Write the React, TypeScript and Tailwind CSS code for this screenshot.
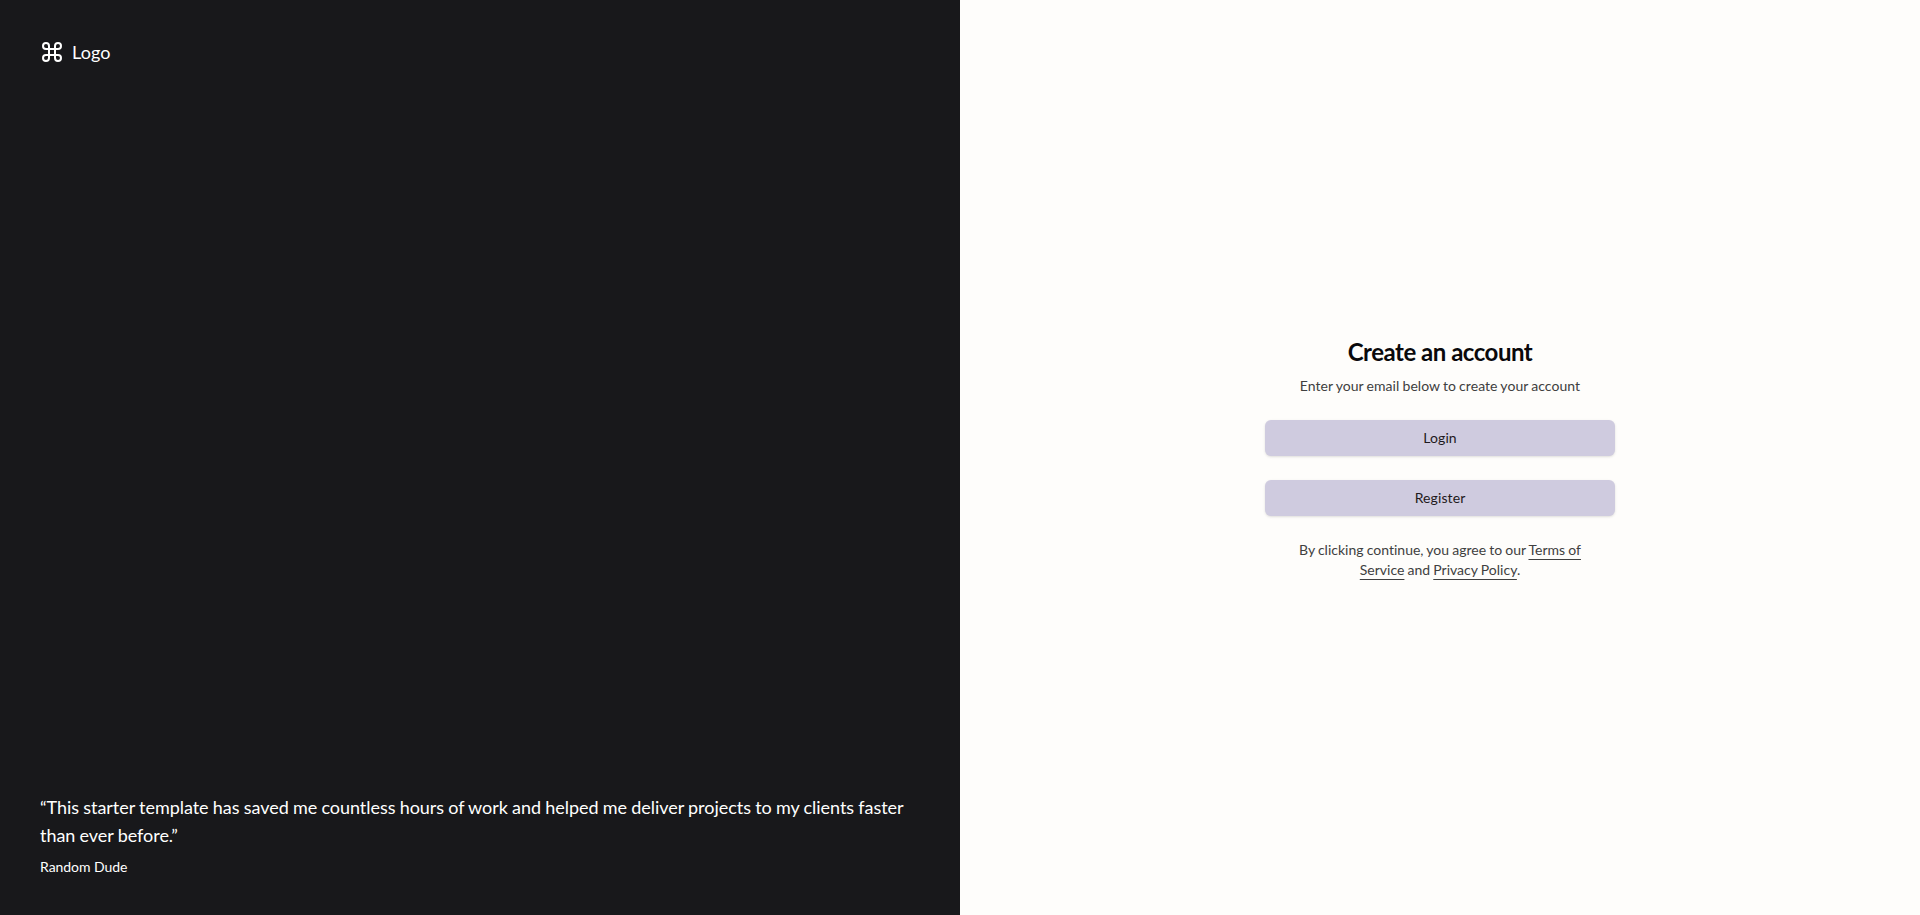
import React from "react";

export default function App() {
  return (
    <div className="grid h-[915px] grid-cols-2 bg-[#fefdfb] font-['Lato',sans-serif] [font-variant-ligatures:none]">
      <div className="flex flex-col bg-[#18181b] px-10 py-[38px] text-white">
        <div className="flex items-center text-lg">
          <svg className="mr-2 h-6 w-6" viewBox="0 0 24 24" fill="none" stroke="currentColor" strokeWidth="2" strokeLinecap="round" strokeLinejoin="round">
            <path d="M15 6v12a3 3 0 1 0 3-3H6a3 3 0 1 0 3 3V6a3 3 0 1 0-3 3h12a3 3 0 1 0-3-3" />
          </svg>
          <span className="tracking-[0.1px]">Logo</span>
        </div>
        <blockquote className="mt-auto space-y-2">
          <p className="text-lg tracking-[-0.04px] [word-spacing:-0.32px]">
            “This starter template has saved me countless hours of work and helped me deliver projects to my clients faster than ever before.”
          </p>
          <footer className="text-sm tracking-[-0.04px]">Random Dude</footer>
        </blockquote>
      </div>
      <div className="flex items-center justify-center">
        <div className="flex w-[350px] flex-col gap-6">
          <div className="flex flex-col gap-2 text-center">
            <h1 className="text-2xl font-bold tracking-[-0.48px] text-[#0a090b]">Create an account</h1>
            <p className="text-sm tracking-[0.05px] text-[#404040] [word-spacing:-0.5px]">Enter your email below to create your account</p>
          </div>
          <button className="h-9 rounded-md bg-[#cfcbdf] text-sm tracking-[0.1px] text-[#1f1a20] shadow-sm">Login</button>
          <button className="h-9 rounded-md bg-[#cfcbdf] text-sm tracking-[0.1px] text-[#1f1a20] shadow-sm">Register</button>
          <p className="px-8 text-center text-sm tracking-[0.01px] text-[#404040] [word-spacing:-0.5px]">
            By clicking continue, you agree to our{" "}
            <a className="underline decoration-1 underline-offset-4">Terms of Service</a> and{" "}
            <a className="underline decoration-1 underline-offset-4">Privacy Policy</a>.
          </p>
        </div>
      </div>
    </div>
  );
}
